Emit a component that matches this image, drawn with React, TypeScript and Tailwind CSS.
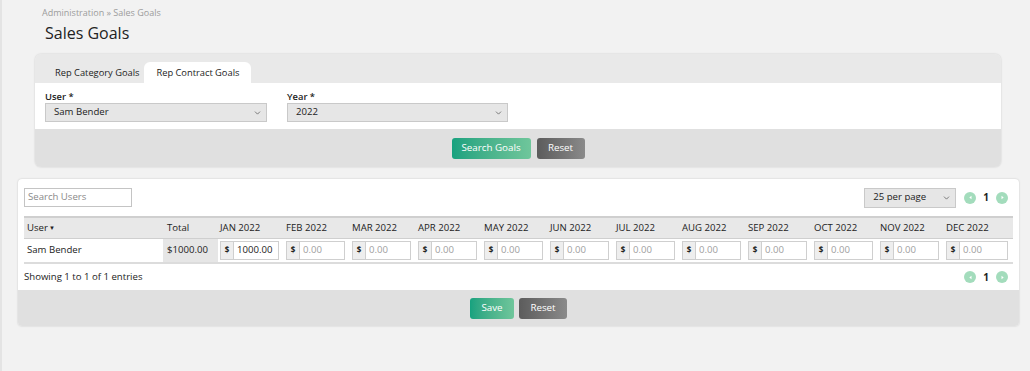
import { ChevronDown } from "lucide-react";

const months = ["JAN", "FEB", "MAR", "APR", "MAY", "JUN", "JUL", "AUG", "SEP", "OCT", "NOV", "DEC"];
const goals: Record<string, string> = { JAN: "1000.00" };

function Select({ value, className }: { value: string; className: string }) {
  return (
    <div className={`relative ${className}`}>
      <div className="flex h-full items-center border border-[#c9c9c9] bg-[#e6e6e6] pl-[8px] text-[9.6px] text-[#222]">{value}</div>
      <ChevronDown className="absolute right-[5px] top-1/2 h-[9px] w-[9px] -translate-y-1/2 text-[#444]" strokeWidth={1.75} />
    </div>
  );
}

function PageDot({ dir }: { dir: "left" | "right" }) {
  return (
    <span className="flex h-[12px] w-[12px] items-center justify-center rounded-full bg-[#a3dcbc]">
      <svg width="5" height="5" viewBox="0 0 6 6">
        {dir === "left" ? <path d="M4.2 0.8 L1.6 3 L4.2 5.2 Z" fill="#fff" /> : <path d="M1.8 0.8 L4.4 3 L1.8 5.2 Z" fill="#fff" />}
      </svg>
    </span>
  );
}

function Pager() {
  return (
    <div className="flex items-center gap-[7px] text-[10px] font-bold text-[#222]">
      <PageDot dir="left" />
      <span>1</span>
      <PageDot dir="right" />
    </div>
  );
}

function GreenBtn({ label, w }: { label: string; w: string }) {
  return (
    <button className={`${w} h-[21px] rounded-[3px] bg-gradient-to-r from-[#16a27f] to-[#6fc69b] text-[9.8px] text-white`}>{label}</button>
  );
}

function GreyBtn({ label, w }: { label: string; w: string }) {
  return (
    <button className={`${w} h-[21px] rounded-[3px] bg-gradient-to-r from-[#5c5c5c] to-[#8a8a8a] text-[9.8px] text-white`}>{label}</button>
  );
}

export default function App() {
  return (
    <div className="h-[371px] w-full overflow-hidden border-l-2 border-[#e4e4e4] bg-[#f2f2f2] font-['Open_Sans',sans-serif] text-[#222]">
      <div className="pl-[40px] pt-[6px] text-[9px] leading-[14px] text-[#9c9c9c]">Administration » Sales Goals</div>
      <h1 className="pl-[43px] pt-[2px] text-[16px] leading-[22px] text-[#222]">Sales Goals</h1>

      <div className="ml-[33px] mr-[29px] mt-[10px] rounded-[6px] shadow-[0_0_2px_rgba(0,0,0,0.18)]">
        <div className="flex h-[29px] items-end rounded-t-[6px] bg-[#e9e9e9] pl-[10px]">
          <div className="flex h-[21px] items-center pl-[10px] pr-[5px] text-[9.3px] font-medium text-[#222]">Rep Category Goals</div>
          <div className="flex h-[21px] items-center rounded-t-[6px] bg-white px-[12px] text-[9.3px] font-medium text-[#222]">Rep Contract Goals</div>
        </div>
        <div className="flex h-[46px] gap-[20px] bg-white px-[10px] pt-[7px]">
          <div>
            <div className="text-[9.4px] font-semibold leading-[13px]">User *</div>
            <Select value="Sam Bender" className="h-[19px] w-[222px]" />
          </div>
          <div>
            <div className="text-[9.4px] font-semibold leading-[13px]">Year *</div>
            <Select value="2022" className="h-[19px] w-[221px]" />
          </div>
        </div>
        <div className="flex h-[38px] items-center justify-center gap-[6px] rounded-b-[6px] bg-[#e0e0e0]">
          <GreenBtn label="Search Goals" w="w-[79px]" />
          <GreyBtn label="Reset" w="w-[48px]" />
        </div>
      </div>

      <div className="ml-[16px] mr-[11px] mt-[12px] rounded-[4px] bg-white shadow-[0_0_2px_rgba(0,0,0,0.2)]">
        <div className="flex h-[37px] items-center justify-between pl-[6px] pr-[11px]">
          <div className="flex h-[19px] w-[108px] items-center border border-[#c4c4c4] pl-[3px] text-[9.6px] text-[#8a8a8a]">Search Users</div>
          <div className="flex items-center gap-[8px]">
            <Select value="25 per page" className="h-[20px] w-[92px]" />
            <Pager />
          </div>
        </div>
        <div className="px-[6px]">
          <table className="w-[989px] table-fixed border-collapse text-left text-[9.6px]">
            <colgroup>
              <col className="w-[139px]" />
              <col className="w-[55px]" />
              {months.map((m, i) => (
                <col key={m} className={i === 11 ? "w-[69px]" : "w-[66px]"} />
              ))}
            </colgroup>
            <thead>
              <tr className="border-t-2 border-b border-[#cfcfcf] bg-[#e8e8e8]">
                <th className="h-[21px] p-0 pl-[3px] font-normal">
                  User<span className="ml-[1px] inline-block translate-y-[-1px] text-[6px]">▼</span>
                </th>
                <th className="p-0 pl-[4px] font-normal">Total</th>
                {months.map((m) => (
                  <th key={m} className="p-0 pl-[2px] font-normal">{m} 2022</th>
                ))}
              </tr>
            </thead>
            <tbody>
              <tr className="border-b-2 border-[#dcdcdc]">
                <td className="h-[25px] p-0 pl-[3px]">Sam Bender</td>
                <td className="bg-[#e6e6e6] p-0 pl-[4px]">$1000.00</td>
                {months.map((m) => (
                  <td key={m} className="p-0 pl-[2px] pr-[5px]">
                    <div className="flex h-[19px] border border-[#cfcfcf]">
                      <span className="flex w-[13px] items-center justify-center border-r border-[#cfcfcf] bg-[#eeeeee] text-[8px] font-bold">$</span>
                      <span className={`flex items-center pl-[3px] ${goals[m] ? "text-[#222]" : "text-[#a0a0a0]"}`}>{goals[m] ?? "0.00"}</span>
                    </div>
                  </td>
                ))}
              </tr>
            </tbody>
          </table>
        </div>
        <div className="flex h-[26px] items-center justify-between pl-[6px] pr-[11px] text-[9.6px]">
          <span>Showing 1 to 1 of 1 entries</span>
          <Pager />
        </div>
        <div className="flex h-[36px] items-center justify-center gap-[5px] rounded-b-[4px] bg-[#e0e0e0]">
          <GreenBtn label="Save" w="w-[44px]" />
          <GreyBtn label="Reset" w="w-[48px]" />
        </div>
      </div>
    </div>
  );
}
